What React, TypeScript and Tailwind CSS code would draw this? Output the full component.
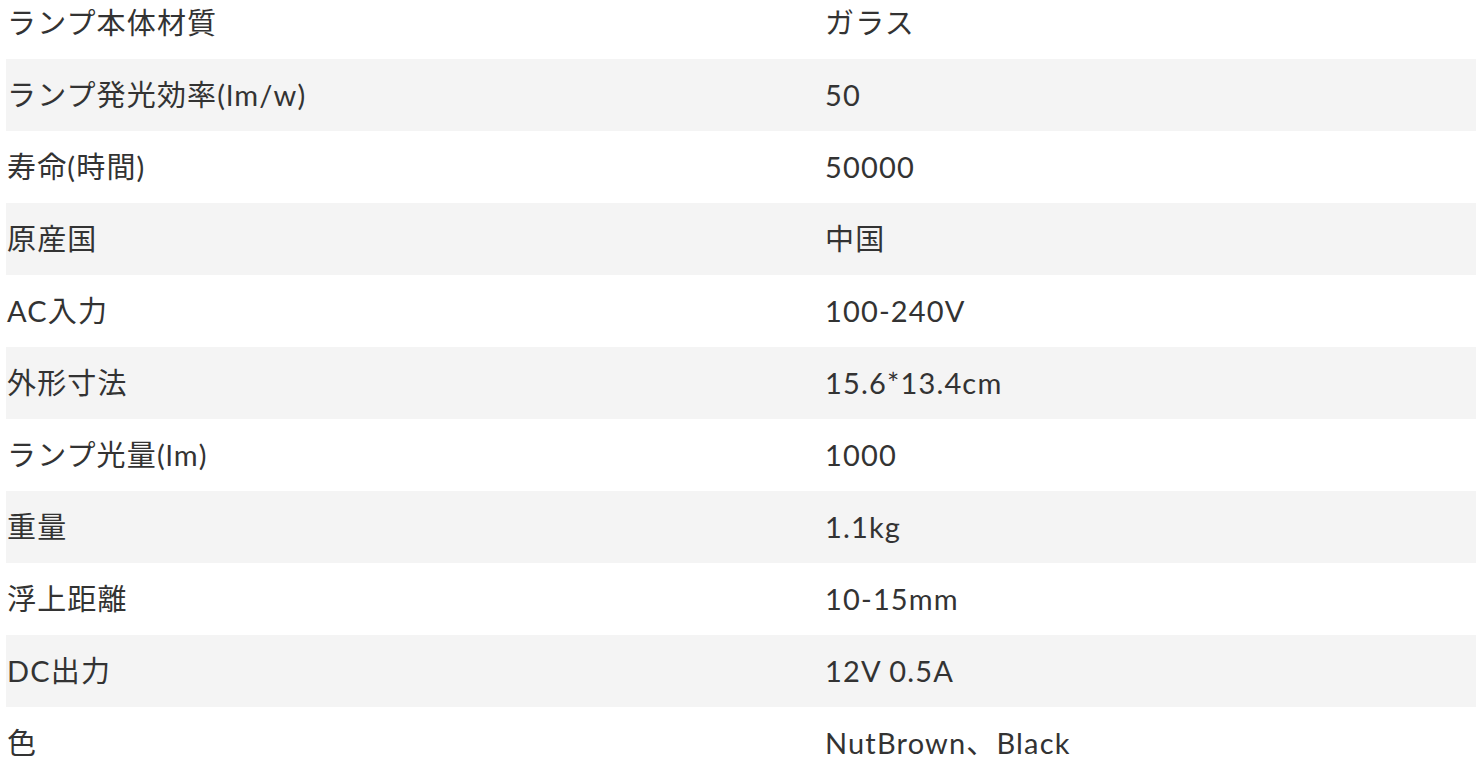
const SPECS: { label: string; value: string }[] = [
  { label: "ランプ本体材質", value: "ガラス" },
  { label: "ランプ発光効率(lm/w)", value: "50" },
  { label: "寿命(時間)", value: "50000" },
  { label: "原産国", value: "中国" },
  { label: "AC入力", value: "100-240V" },
  { label: "外形寸法", value: "15.6*13.4cm" },
  { label: "ランプ光量(lm)", value: "1000" },
  { label: "重量", value: "1.1kg" },
  { label: "浮上距離", value: "10-15mm" },
  { label: "DC出力", value: "12V 0.5A" },
  { label: "色", value: "NutBrown、Black" },
];

export default function App() {
  return (
    <div className="h-[766px] overflow-hidden bg-white">
      <div
        className="mx-[6px] -mt-[13px] text-[29px] tracking-[0.04em] text-[#333]"
        style={{ fontFamily: 'Lato, "Noto Sans CJK JP", sans-serif' }}
      >
        {SPECS.map((row, i) => (
          <div
            key={row.label}
            className={`grid h-[72px] grid-cols-[819px_1fr] items-center ${
              i % 2 === 1 ? "bg-[#f4f4f4]" : ""
            }`}
          >
            <div className="pl-px">{row.label}</div>
            <div>{row.value}</div>
          </div>
        ))}
      </div>
    </div>
  );
}
